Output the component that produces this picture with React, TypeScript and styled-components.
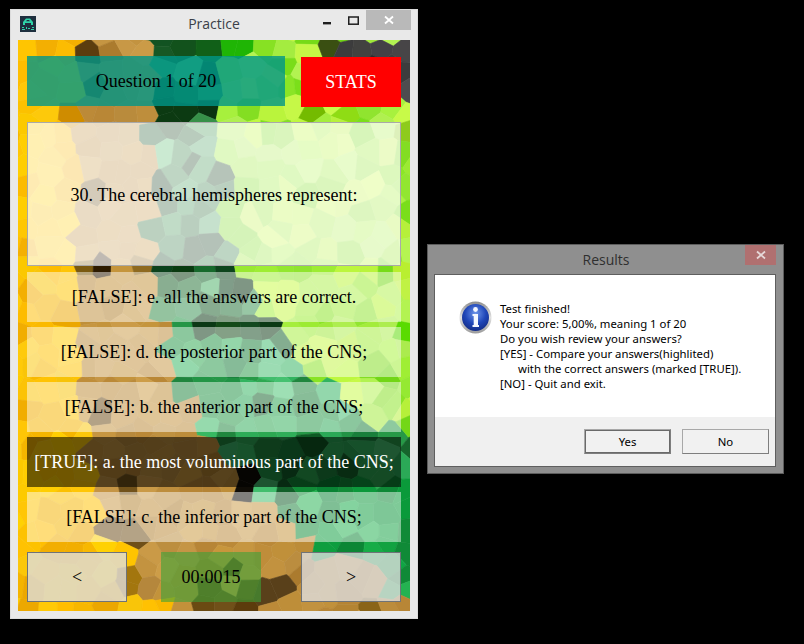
import React, { useMemo } from "react";
import styled, { createGlobalStyle } from "styled-components";

const Global = createGlobalStyle`
  html, body { margin: 0; padding: 0; background: #000; }
`;

const Desktop = styled.div`
  position: relative;
  width: 804px;
  height: 644px;
  background: #000;
  overflow: hidden;
`;

const PracticeWindow = styled.section`
  position: absolute;
  left: 10px;
  top: 9px;
  width: 408px;
  height: 610px;
  box-sizing: border-box;
  padding: 0 7px 7px;
  background: #e9e9e9;
  border: 1px solid #dcdcdc;
  display: flex;
  flex-direction: column;
`;

const TitleBar = styled.header`
  height: 30px;
  flex: none;
  display: grid;
  grid-template-columns: 1fr auto 1fr;
  align-items: center;
  position: relative;
`;

const AppIcon = styled.svg`
  width: 16px;
  height: 16px;
  margin: 0 0 2px 2px;
  display: block;
`;

const TitleText = styled.span<{ $dark?: boolean }>`
  font-family: "Open Sans", "Noto Sans", sans-serif;
  font-size: 14px;
  color: ${(p) => (p.$dark ? "#2f2f2f" : "#3a3f48")};
  line-height: 20px;
  margin-bottom: 2px;
`;

const Controls = styled.div`
  justify-self: end;
  display: flex;
  align-items: flex-start;
  height: 100%;
  margin-right: -1px;
`;

const ControlSlot = styled.div<{ $w: number; $low?: boolean }>`
  width: ${(p) => p.$w}px;
  height: 20px;
  display: flex;
  align-items: ${(p) => (p.$low ? "flex-end" : "center")};
  justify-content: center;
  padding-bottom: ${(p) => (p.$low ? "5px" : "0")};
  box-sizing: border-box;
`;

const CloseButton = styled.div<{ $bg: string; $w: number }>`
  width: ${(p) => p.$w}px;
  height: 20px;
  background: ${(p) => p.$bg};
  display: flex;
  align-items: center;
  justify-content: center;
`;

const Client = styled.main`
  position: relative;
  flex: 1;
  overflow: hidden;
  display: flex;
  flex-direction: column;
  padding: 16px 9px 9px 9px;
  font-family: "Liberation Serif", "Times New Roman", serif;
  font-size: 18px;
  color: #000;
`;

const Mosaic = styled.svg`
  position: absolute;
  left: 0;
  top: 0;
  width: 392px;
  height: 571px;
`;

const TopRow = styled.div`
  position: relative;
  display: flex;
  justify-content: space-between;
  align-items: flex-start;
  height: 51px;
  flex: none;
`;

const Banner = styled.div`
  width: 258px;
  height: 50px;
  box-sizing: border-box;
  padding-top: 1px;
  background: rgba(0, 150, 136, 0.8);
  display: flex;
  align-items: center;
  justify-content: center;
`;

const StatsButton = styled.div`
  width: 100px;
  height: 50px;
  margin-top: 1px;
  background: #ff0000;
  color: #fff;
  display: flex;
  align-items: center;
  justify-content: center;
`;

const QuestionPanel = styled.div`
  position: relative;
  margin-top: 15px;
  height: 144px;
  box-sizing: border-box;
  padding-top: 2px;
  border: 1px solid #a9a9a9;
  background: rgba(255, 255, 255, 0.7);
  display: flex;
  align-items: center;
  justify-content: center;
  flex: none;
`;

const Answers = styled.div`
  position: relative;
  display: flex;
  flex-direction: column;
  gap: 5px;
  margin-top: 6px;
  flex: none;
`;

const Answer = styled.div<{ $correct?: boolean }>`
  height: 50px;
  background: ${(p) => (p.$correct ? "rgba(0,0,0,0.56)" : "rgba(255,255,255,0.48)")};
  color: ${(p) => (p.$correct ? "#fff" : "#000")};
  display: flex;
  align-items: center;
  justify-content: center;
  white-space: nowrap;
`;

const BottomRow = styled.div`
  position: relative;
  display: flex;
  justify-content: space-between;
  margin-top: 10px;
  flex: none;
`;

const NavButton = styled.div`
  width: 100px;
  height: 50px;
  box-sizing: border-box;
  border: 1px solid #6f7378;
  background: rgba(221, 221, 221, 0.8);
  display: flex;
  align-items: center;
  justify-content: center;
`;

const Timer = styled.div`
  width: 100px;
  height: 50px;
  margin-left: -6px;
  background: rgba(60, 162, 57, 0.6);
  display: flex;
  align-items: center;
  justify-content: center;
`;

const ResultsWindow = styled.section`
  position: absolute;
  left: 427px;
  top: 244px;
  width: 357px;
  height: 230px;
  box-sizing: border-box;
  background: #8f8f8f;
  border: 1px solid #5c5c5c;
  padding: 0 7px 6px 6px;
  display: flex;
  flex-direction: column;
`;

const ResultsTitle = styled.header`
  height: 29px;
  flex: none;
  display: grid;
  grid-template-columns: 1fr auto 1fr;
`;

const ResultsCaption = styled(TitleText)`
  line-height: 30px;
  padding-left: 2px;
  margin-bottom: 0;
`;

const ResultsClose = styled(Controls)`
  grid-column: 3;
  margin-right: 0;
`;

const ResultsClient = styled.div`
  flex: 1;
  display: flex;
  flex-direction: column;
  border: 1px solid #5f5f5f;
  font-family: "Noto Sans", "Open Sans", sans-serif;
  font-size: 11.35px;
  color: #000;
`;

const MessageArea = styled.div`
  height: 142px;
  flex: none;
  background: #fff;
  display: flex;
  align-items: flex-start;
  padding: 26px 0 0 24px;
  box-sizing: border-box;
  gap: 8px;
`;

const InfoIcon = styled.svg`
  width: 33px;
  height: 33px;
  flex: none;
`;

const MessageText = styled.div`
  line-height: 15px;
  white-space: nowrap;
`;

const Line = styled.div<{ $indent?: boolean }>`
  padding-left: ${(p) => (p.$indent ? "18px" : "0")};
`;

const Footer = styled.div`
  flex: 1;
  background: #f0f0f0;
  display: flex;
  justify-content: flex-end;
  align-items: flex-start;
  gap: 11px;
  padding: 12px 6px 0 0;
`;

const DialogButton = styled.div<{ $default?: boolean }>`
  width: 87px;
  height: 25px;
  box-sizing: border-box;
  background: #f1f1f1;
  border: 1px solid #a8a8a8;
  border-right-color: #7e7e7e;
  border-bottom-color: #7e7e7e;
  box-shadow: ${(p) => (p.$default ? "inset 0 0 0 1px #6a6a6a" : "none")};
  display: flex;
  align-items: center;
  justify-content: center;
`;

/* ---------- mosaic ---------- */

type Pt = [number, number];

const interp = (v: number, pts: Pt[]) => {
  for (let i = 0; i < pts.length - 1; i++) {
    const [a, b] = pts[i];
    const [c, d] = pts[i + 1];
    if (v <= c) return b + ((v - a) / (c - a)) * (d - b);
  }
  return pts[pts.length - 1][1];
};

const OX = 18;
const OY = 40;

// Region boundaries in page coordinates: [y, x]
const yellowEdge: Pt[] = [[40, 76], [300, 78], [490, 84], [545, 115], [612, 168]];
const brownEdge: Pt[] = [[40, 150], [270, 152], [380, 172], [440, 212], [500, 262], [560, 335], [612, 430]];
const darkEdge: Pt[] = [[40, 218], [270, 232], [350, 290], [395, 335], [440, 402], [470, 450]];
const grayEdge: Pt[] = [[40, 318], [110, 395], [125, 420]];

const patches: [number, number, number, string][] = [
  [92, 47, 12, "#5c3d0e"], [120, 50, 8, "#8a6420"], [133, 50, 9, "#46320c"], [78, 46, 8, "#d89a00"],
  [74, 114, 10, "#cf8c00"], [112, 108, 10, "#5a3d10"], [97, 118, 6, "#3f2a06"], [125, 115, 9, "#b98b3c"],
  [160, 47, 9, "#2ea64e"], [185, 50, 20, "#12521c"], [205, 45, 9, "#116018"], [170, 112, 16, "#0c3a12"],
  [200, 112, 14, "#0a3310"], [148, 118, 7, "#2c5c1e"], [218, 115, 7, "#3cb05e"],
  [242, 50, 12, "#1fb505"], [258, 48, 7, "#0d9a00"], [278, 48, 9, "#a4ec40"], [224, 48, 8, "#7fe83a"],
  [238, 110, 10, "#2ebd08"], [262, 112, 10, "#7eea50"], [250, 118, 6, "#0c8a00"], [296, 50, 9, "#8ddb00"],
  [330, 46, 9, "#3a4f12"], [312, 60, 7, "#b4f02c"], [320, 113, 10, "#74bb00"], [345, 116, 9, "#8fdc14"],
  [385, 115, 10, "#6f9a1e"], [404, 125, 7, "#8ecb1c"], [405, 175, 8, "#a3e800"],
  [95, 268, 8, "#2c1a00"], [185, 270, 8, "#0a3a10"], [205, 268, 6, "#17692c"], [310, 270, 8, "#3b9e14"],
  [80, 268, 6, "#7a5a10"], [140, 268, 8, "#8f6a20"],
  [165, 323, 6, "#1a1208"], [228, 325, 6, "#144a18"], [95, 323, 5, "#3c2a08"], [360, 326, 5, "#3fa80c"],
  [150, 380, 6, "#1a1208"], [285, 378, 7, "#0f6a25"], [85, 378, 5, "#5c3c0c"],
  [197, 441, 9, "#120d04"], [210, 452, 8, "#3a2a10"], [245, 482, 11, "#0f0c06"], [94, 484, 10, "#1c1408"],
  [260, 442, 7, "#1a7a30"], [310, 445, 8, "#0e5a24"],
  [160, 550, 9, "#2c1e08"], [175, 562, 7, "#5a3c0e"], [150, 548, 7, "#8c6616"], [265, 550, 6, "#352408"],
  [275, 592, 9, "#59401a"], [288, 578, 7, "#8a5c22"], [210, 606, 7, "#6a4a12"],
  [245, 608, 7, "#5c3c0c"], [340, 550, 9, "#0e8a2a"], [410, 600, 9, "#5a5222"], [300, 606, 6, "#49300a"],
  [130, 575, 12, "#a3760e"], [335, 610, 6, "#553c10"], [370, 610, 6, "#8a6418"],
  [402, 500, 10, "#0a9a3a"], [396, 545, 8, "#0f7a32"], [408, 540, 6, "#11a640"],
  [410, 475, 9, "#1f6a2c"], [406, 395, 10, "#62dd00"], [405, 330, 10, "#5adb00"], [410, 270, 8, "#b9ef30"],
];

const hex = (r: number, g: number, b: number) => {
  const c = (v: number) => Math.max(0, Math.min(255, Math.round(v))).toString(16).padStart(2, "0");
  return `#${c(r)}${c(g)}${c(b)}`;
};

const pick = (rnd: () => number, list: [number, number, number][]) => {
  const [r, g, b] = list[Math.floor(rnd() * list.length)];
  const j = (rnd() - 0.5) * 10;
  return hex(r + j, g + j, b + j * 0.5);
};

const cellColor = (x: number, y: number, rnd: () => number) => {
  for (const [px, py, pr, col] of patches) {
    if ((x - px) ** 2 + (y - py) ** 2 < pr * pr) return col;
  }
  if (x < interp(y, yellowEdge)) {
    return pick(rnd, [[255, 196, 0], [255, 190, 0], [252, 200, 10], [248, 184, 0], [255, 204, 0], [255, 198, 6], [240, 172, 0]]);
  }
  if (x < interp(y, brownEdge)) {
    return pick(rnd, [[190, 142, 60], [196, 148, 64], [184, 134, 54], [200, 152, 70], [192, 144, 58], [196, 146, 58], [186, 140, 62], [176, 128, 48], [198, 150, 66], [188, 138, 56], [110, 78, 24]]);
  }
  if (y > 480 && x > 300) {
    return pick(rnd, [[16, 160, 64], [20, 170, 70], [10, 150, 58], [34, 176, 80], [14, 136, 54]]);
  }
  if (y > 40 && y < 120 && x > interp(y, grayEdge)) {
    return pick(rnd, [[62, 62, 62], [54, 54, 54], [72, 70, 72], [46, 46, 46], [80, 78, 80]]);
  }
  if (x < interp(y, darkEdge) || y > 455) {
    if (y > 330) {
      return pick(rnd, [[42, 165, 80], [50, 180, 96], [36, 150, 70], [66, 190, 110], [28, 130, 60], [46, 172, 88], [18, 96, 42]]);
    }
    return pick(rnd, [[30, 100, 45], [20, 85, 35], [50, 140, 70], [16, 70, 30], [60, 150, 85], [36, 115, 55], [80, 180, 105], [10, 55, 20]]);
  }
  return pick(rnd, [[165, 238, 60], [155, 234, 50], [186, 244, 60], [146, 230, 48], [176, 240, 80], [136, 226, 36], [196, 246, 70], [118, 218, 24]]);
};

type Cell = { points: string; fill: string };

const buildMosaic = (): Cell[] => {
  let seed = 4711;
  const rnd = () => {
    seed = (seed * 1664525 + 1013904223) >>> 0;
    return seed / 4294967296;
  };
  const W = 392;
  const H = 571;
  const step = 20;
  const seeds: Pt[] = [];
  for (let y = -step; y < H + step; y += step) {
    for (let x = -step; x < W + step; x += step) {
      seeds.push([x + 2 + rnd() * (step - 4), y + 2 + rnd() * (step - 4)]);
    }
  }
  const cells: Cell[] = [];
  for (const s of seeds) {
    let poly: Pt[] = [[s[0] - 60, s[1] - 60], [s[0] + 60, s[1] - 60], [s[0] + 60, s[1] + 60], [s[0] - 60, s[1] + 60]];
    for (const o of seeds) {
      if (o === s) continue;
      const dx = o[0] - s[0];
      const dy = o[1] - s[1];
      if (dx * dx + dy * dy > 8100) continue;
      const mx = (o[0] + s[0]) / 2;
      const my = (o[1] + s[1]) / 2;
      const out: Pt[] = [];
      for (let i = 0; i < poly.length; i++) {
        const a = poly[i];
        const b = poly[(i + 1) % poly.length];
        const da = (a[0] - mx) * dx + (a[1] - my) * dy;
        const db = (b[0] - mx) * dx + (b[1] - my) * dy;
        if (da <= 0) out.push(a);
        if (da < 0 !== db < 0) {
          const t = da / (da - db);
          out.push([a[0] + (b[0] - a[0]) * t, a[1] + (b[1] - a[1]) * t]);
        }
      }
      poly = out;
      if (!poly.length) break;
    }
    if (!poly.length) continue;
    cells.push({
      points: poly.map((p) => `${p[0].toFixed(1)},${p[1].toFixed(1)}`).join(" "),
      fill: cellColor(s[0] + OX, s[1] + OY, rnd),
    });
  }
  return cells;
};

const CloseGlyph = ({ color }: { color: string }) => (
  <svg width="10" height="10" viewBox="0 0 10 10">
    <path d="M1 1.5 L9 8.5 M9 1.5 L1 8.5" stroke={color} strokeWidth="1.8" fill="none" />
  </svg>
);

const answers = [
  { text: "[FALSE]: e. all the answers are correct." },
  { text: "[FALSE]: d. the posterior part of the CNS;" },
  { text: "[FALSE]: b. the anterior part of the CNS;" },
  { text: "[TRUE]: a. the most voluminous part of the CNS;", correct: true },
  { text: "[FALSE]: c. the inferior part of the CNS;" },
];

const messageLines: { text: string; indent?: boolean }[] = [
  { text: "Test finished!" },
  { text: "Your score: 5,00%, meaning 1 of 20" },
  { text: "Do you wish review your answers?" },
  { text: "[YES] - Compare your answers(highlited)" },
  { text: "with the correct answers (marked [TRUE]).", indent: true },
  { text: "[NO] - Quit and exit." },
];

export default function App() {
  const cells = useMemo(buildMosaic, []);
  return (
    <Desktop>
      <Global />
      <PracticeWindow>
        <TitleBar>
          <AppIcon viewBox="0 0 16 16">
            <rect width="16" height="16" fill="#1e2f3e" />
            <path d="M3 9 L3 6 L6 2.5 L10 2.5 L13 6 L13 9 L11 9 L11 7 L5 7 L5 9 Z M6 5.3 L10 5.3 L9 4 L7 4 Z" fill="#2fd3a8" fillRule="evenodd" />
            <path d="M2 11 H4 V12 H2 Z M6 11 H7 V13 H6 Z M8 12 H10 V13 H8 Z M12 11 H14 V12 H12 Z M2 13 H5 V14 H2 Z M11 13 H14 V14 H11 Z" fill="#2fd3a8" />
          </AppIcon>
          <TitleText>Practice</TitleText>
          <Controls>
            <ControlSlot $w={26} $low>
              <svg width="8" height="3" viewBox="0 0 8 3" display="block"><rect width="8" height="2.4" fill="#1f1f1f" /></svg>
            </ControlSlot>
            <ControlSlot $w={26}>
              <svg width="11" height="9" viewBox="0 0 11 9"><rect x="0.75" y="1" width="9.5" height="7.2" fill="none" stroke="#1f1f1f" strokeWidth="1.5" /></svg>
            </ControlSlot>
            <CloseButton $bg="#b9b9b9" $w={45}>
              <CloseGlyph color="#ffffff" />
            </CloseButton>
          </Controls>
        </TitleBar>
        <Client>
          <Mosaic viewBox="0 0 392 571">
            {cells.map((c, i) => (
              <polygon key={i} points={c.points} fill={c.fill} stroke={c.fill} strokeWidth="0.6" />
            ))}
          </Mosaic>
          <TopRow>
            <Banner>Question 1 of 20</Banner>
            <StatsButton>STATS</StatsButton>
          </TopRow>
          <QuestionPanel>30. The cerebral hemispheres represent:</QuestionPanel>
          <Answers>
            {answers.map((a) => (
              <Answer key={a.text} $correct={a.correct}>{a.text}</Answer>
            ))}
          </Answers>
          <BottomRow>
            <NavButton>&lt;</NavButton>
            <Timer>00:0015</Timer>
            <NavButton>&gt;</NavButton>
          </BottomRow>
        </Client>
      </PracticeWindow>

      <ResultsWindow>
        <ResultsTitle>
          <span />
          <ResultsCaption $dark>Results</ResultsCaption>
          <ResultsClose>
            <CloseButton $bg="#b07070" $w={31}>
              <CloseGlyph color="#e6d8d8" />
            </CloseButton>
          </ResultsClose>
        </ResultsTitle>
        <ResultsClient>
          <MessageArea>
            <InfoIcon viewBox="0 0 33 33">
              <defs>
                <radialGradient id="infoBlue" cx="50%" cy="35%" r="70%">
                  <stop offset="0%" stopColor="#6f96ea" />
                  <stop offset="55%" stopColor="#1f46b8" />
                  <stop offset="100%" stopColor="#12297f" />
                </radialGradient>
                <linearGradient id="infoRing" x1="0" y1="0" x2="0" y2="1">
                  <stop offset="0%" stopColor="#8c8c8c" />
                  <stop offset="50%" stopColor="#e2e2e2" />
                  <stop offset="100%" stopColor="#9a9a9a" />
                </linearGradient>
              </defs>
              <circle cx="16.5" cy="16.5" r="16" fill="url(#infoRing)" />
              <circle cx="16.5" cy="16.5" r="13.5" fill="url(#infoBlue)" />
              <circle cx="16.5" cy="8.5" r="2.4" fill="#f4f7ff" />
              <path d="M13.5 13 H19 V24 H20 V26 H13.5 V24 H14.7 V15 H13.5 Z" fill="#f4f7ff" />
            </InfoIcon>
            <MessageText>
              {messageLines.map((l) => (
                <Line key={l.text} $indent={l.indent}>{l.text}</Line>
              ))}
            </MessageText>
          </MessageArea>
          <Footer>
            <DialogButton $default>Yes</DialogButton>
            <DialogButton>No</DialogButton>
          </Footer>
        </ResultsClient>
      </ResultsWindow>
    </Desktop>
  );
}
